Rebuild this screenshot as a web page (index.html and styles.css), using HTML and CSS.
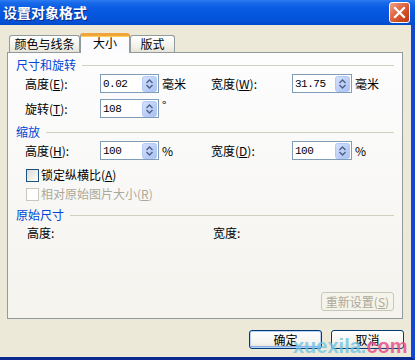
FILE: index.html
```html
<!DOCTYPE html>
<html lang="zh">
<head>
<meta charset="utf-8">
<title>设置对象格式</title>
<link rel="stylesheet" href="styles.css">
</head>
<body>
<div class="window">
  <div class="titlebar">
    <span class="title">设置对象格式</span>
    <span class="close">
      <svg width="19" height="19" viewBox="0 0 19 19"><path d="M5 5 L14 14 M14 5 L5 14" stroke="#fff" stroke-width="2.2" stroke-linecap="square"/></svg>
    </span>
  </div>
  <div class="client">
    <div class="tabs">
      <div class="tab t1">颜色与线条</div>
      <div class="tab t2 active">大小</div>
      <div class="tab t3">版式</div>
    </div>
    <div class="panel">
      <div class="group-head"><span>尺寸和旋转</span></div>
      <div class="row first">
        <span class="lbl">高度(<u>E</u>):</span>
        <span class="field"><span class="val">0.02</span><span class="spin"><svg width="15" height="16" viewBox="0 0 15 16"><defs><linearGradient id="g1" x1="0" y1="0" x2="1" y2="1"><stop offset="0" stop-color="#d4e1fd"/><stop offset="1" stop-color="#a9c0f3"/></linearGradient></defs><rect x="0.5" y="0.5" width="14" height="15" rx="2" fill="url(#g1)" stroke="#b4c8f6"/><path d="M4.5 7 L7.5 4 L10.5 7 M4.5 9 L7.5 12 L10.5 9" fill="none" stroke="#4d6185" stroke-width="1.4"/></svg></span></span>
        <span class="unit">毫米</span>
        <span class="lbl">宽度(<u>W</u>):</span>
        <span class="field"><span class="val">31.75</span><span class="spin"><svg width="15" height="16" viewBox="0 0 15 16"><rect x="0.5" y="0.5" width="14" height="15" rx="2" fill="url(#g1)" stroke="#b4c8f6"/><path d="M4.5 7 L7.5 4 L10.5 7 M4.5 9 L7.5 12 L10.5 9" fill="none" stroke="#4d6185" stroke-width="1.4"/></svg></span></span>
        <span class="unit">毫米</span>
      </div>
      <div class="row second">
        <span class="lbl">旋转(<u>T</u>):</span>
        <span class="field"><span class="val">108</span><span class="spin"><svg width="15" height="16" viewBox="0 0 15 16"><rect x="0.5" y="0.5" width="14" height="15" rx="2" fill="url(#g1)" stroke="#b4c8f6"/><path d="M4.5 7 L7.5 4 L10.5 7 M4.5 9 L7.5 12 L10.5 9" fill="none" stroke="#4d6185" stroke-width="1.4"/></svg></span></span>
        <span class="unit deg">°</span>
      </div>
      <div class="group-head g2"><span>缩放</span></div>
      <div class="row first">
        <span class="lbl">高度(<u>H</u>):</span>
        <span class="field"><span class="val">100</span><span class="spin"><svg width="15" height="16" viewBox="0 0 15 16"><rect x="0.5" y="0.5" width="14" height="15" rx="2" fill="url(#g1)" stroke="#b4c8f6"/><path d="M4.5 7 L7.5 4 L10.5 7 M4.5 9 L7.5 12 L10.5 9" fill="none" stroke="#4d6185" stroke-width="1.4"/></svg></span></span>
        <span class="unit">%</span>
        <span class="lbl">宽度(<u>D</u>):</span>
        <span class="field"><span class="val">100</span><span class="spin"><svg width="15" height="16" viewBox="0 0 15 16"><rect x="0.5" y="0.5" width="14" height="15" rx="2" fill="url(#g1)" stroke="#b4c8f6"/><path d="M4.5 7 L7.5 4 L10.5 7 M4.5 9 L7.5 12 L10.5 9" fill="none" stroke="#4d6185" stroke-width="1.4"/></svg></span></span>
        <span class="unit">%</span>
      </div>
      <div class="check c1"><span class="box"></span><span>锁定纵横比(<u>A</u>)</span></div>
      <div class="check c2 disabled"><span class="box"></span><span>相对原始图片大小(<u>R</u>)</span></div>
      <div class="group-head g3"><span>原始尺寸</span></div>
      <div class="orig">
        <span>高度:</span>
        <span>宽度:</span>
      </div>
      <div class="reset-row"><span class="btn disabled">重新设置(<u>S</u>)</span></div>
    </div>
    <div class="actions">
      <span class="btn default">确定</span>
      <span class="btn">取消</span>
    </div>
  </div>
  <div class="watermark">xuexila.<span class="com">com</span></div>
</div>
</body>
</html>
```
FILE: styles.css
```css
html, body {
  margin: 0;
  padding: 0;
}
body {
  width: 415px;
  height: 360px;
  overflow: hidden;
  font-family: "Noto Sans CJK SC", "Noto Sans", sans-serif;
  font-size: 12px;
  line-height: 14px;
  color: #000;
  background: #ece9d8;
}
.window {
  position: relative;
  width: 415px;
  height: 360px;
  display: flex;
  flex-direction: column;
}
.titlebar {
  height: 25px;
  flex: none;
  display: flex;
  align-items: flex-start;
  justify-content: space-between;
  background: linear-gradient(#2f7cf2 0%, #1a6bea 10%, #0a5de4 30%, #0656de 60%, #0452d6 85%, #034bc8 100%);
}
.title {
  color: #fff;
  font-weight: bold;
  font-size: 14px;
  line-height: 25px;
  padding-left: 3px;
  text-shadow: 1px 1px 0 #0a2a8a;
}
.close {
  margin: 2px 5px 0 0;
  width: 19px;
  height: 19px;
  border: 1px solid #fff;
  border-radius: 3px;
  background: linear-gradient(135deg, #f0a58a 0%, #e2704f 35%, #cf4a22 70%, #b8381a 100%);
  display: flex;
}
.client {
  flex: 1;
  display: flex;
  flex-direction: column;
  padding: 8px 8px 0 7px;
  border-right: 4px solid #1546d0;
  border-bottom: 3px solid #0a2a90;
  background: #ece9d8;
}
.tabs {
  height: 19px;
  display: flex;
  align-items: flex-end;
  padding-left: 2px;
}
.tab {
  box-sizing: border-box;
  height: 17px;
  border: 1px solid #919b9c;
  border-bottom: none;
  border-radius: 3px 3px 0 0;
  background: linear-gradient(#ffffff, #f3f2ec 60%, #e6e4d9);
  text-align: center;
  line-height: 16px;
}
.t1 { width: 71px; }
.t2 { width: 50px; }
.t3 { width: 45px; }
.tab.active {
  position: relative;
  z-index: 1;
  height: 20px;
  margin-bottom: -1px;
  border-top: 3px solid #f1a43a;
  background: #fcfcfe;
  line-height: 14px;
  box-shadow: inset 0 1px 0 #ffcf5a;
}
.panel {
  box-sizing: border-box;
  height: 267px;
  border: 1px solid #919b9c;
  background: linear-gradient(#fdfdfe, #f4f3ee);
  padding: 5px 8px 7px 8px;
  display: flex;
  flex-direction: column;
}
.group-head {
  display: flex;
  align-items: center;
  gap: 6px;
  height: 14px;
  color: #0046d5;
}
.group-head::after {
  content: "";
  flex: 1;
  height: 1px;
  background: #d0d0bf;
}
.g2 { margin-top: 7px; }
.g3 { margin-top: 7px; }
.row {
  display: grid;
  grid-template-columns: 75px 59px 52px 81px 60px auto;
  align-items: center;
  margin-left: 9px;
  height: 19px;
}
.row.first { margin-top: 2px; }
.row.second { margin-top: 6px; }
.field {
  box-sizing: border-box;
  height: 19px;
  border: 1px solid #7f9db9;
  background: #fff;
  display: flex;
  align-items: center;
  justify-content: space-between;
  padding: 0 1px 0 2px;
}
.val {
  font-family: "Liberation Mono", "DejaVu Sans Mono", monospace;
  font-size: 11px;
  letter-spacing: -0.5px;
}
.spin {
  display: flex;
}
.unit {
  padding-left: 3px;
}
.deg {
  font-size: 12px;
  align-self: start;
  line-height: 12px;
}
u {
  text-decoration: underline;
  text-underline-offset: 1px;
}
.check {
  display: flex;
  align-items: center;
  gap: 2px;
  margin-left: 10px;
  height: 14px;
}
.c1 { margin-top: 8px; }
.c2 { margin-top: 5px; }
.box {
  box-sizing: border-box;
  width: 13px;
  height: 13px;
  border: 1px solid #1c5180;
  background: linear-gradient(135deg, #dcdcd7 0%, #f0f0ea 60%, #ffffff 100%);
}
.check.disabled { color: #aca899; }
.check.disabled .box {
  border-color: #cac8bb;
  background: #fff;
}
.orig {
  display: grid;
  grid-template-columns: 186px auto;
  margin-left: 11px;
  margin-top: 4px;
  height: 14px;
}
.reset-row {
  margin-top: auto;
  display: flex;
  justify-content: flex-end;
}
.btn {
  box-sizing: border-box;
  width: 73px;
  height: 19px;
  border: 1px solid #003c74;
  border-radius: 3px;
  background: linear-gradient(#ffffff, #f4f3ee 70%, #e3e0d2);
  display: flex;
  align-items: center;
  justify-content: center;
  line-height: 14px;
}
.btn.default {
  box-shadow: inset 0 0 0 1px #b9d1f6, inset 0 -1px 0 1px #89adeb;
}
.btn.disabled {
  border-color: #c9c7ba;
  color: #aca899;
  background: #f5f4ea;
}
.actions {
  margin-top: 11px;
  display: flex;
  justify-content: flex-end;
  gap: 9px;
  margin-right: -1px;
}
.actions .btn { width: 73px; }
.watermark {
  position: absolute;
  left: 293px;
  top: 335px;
  font-family: "Liberation Sans", sans-serif;
  font-weight: bold;
  font-size: 20px;
  line-height: 22px;
  color: rgba(110, 195, 230, 0.8);
}
.watermark .com {
  color: rgba(232, 80, 140, 0.85);
}
```
